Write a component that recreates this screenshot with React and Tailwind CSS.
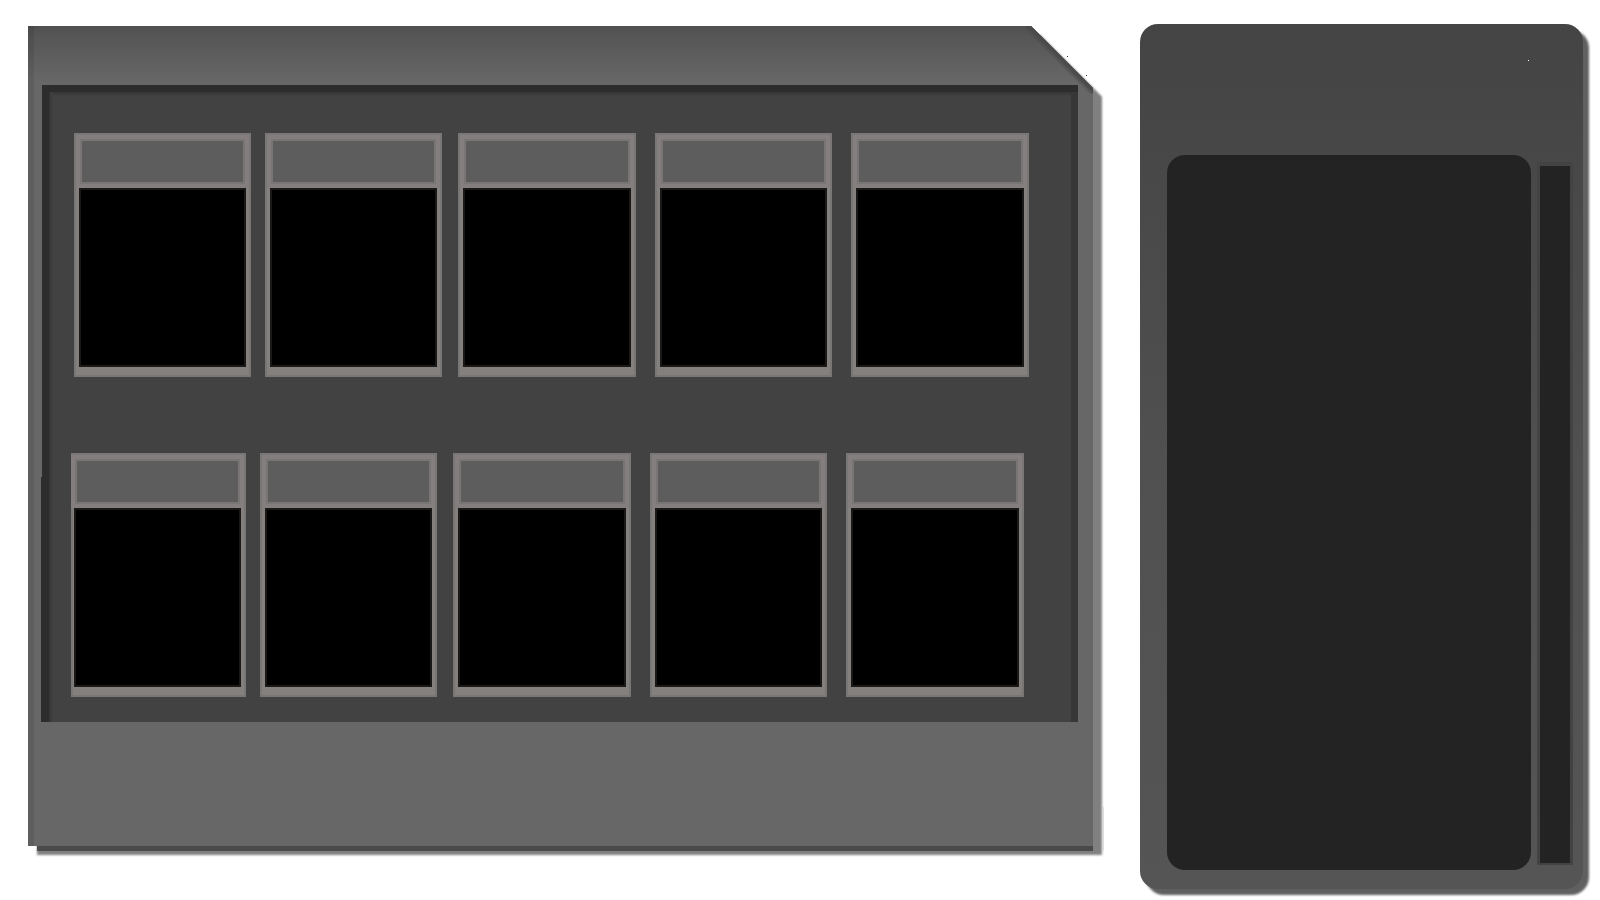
const topRow = [
  'flex-[177] ml-0',
  'flex-[177] ml-[14px]',
  'flex-[178] ml-4',
  'flex-[177] ml-[19px]',
  'flex-[178] ml-[19px]',
];

const bottomRow = [
  'flex-[175] ml-0',
  'flex-[177] ml-[14px]',
  'flex-[178] ml-4',
  'flex-[177] ml-[19px]',
  'flex-[178] ml-[19px]',
];

// A framed slot: a bevelled caption plate above a black display.
function Slot({ className, narrow }) {
  return (
    <div className={`flex h-[244px] flex-col border-2 border-[#797776] bg-[#83807e] ${className}`}>
      <div
        className={`mt-1 mr-1 h-[45px] border-2 border-[#787574] bg-[#5d5d5d] outline-4 outline-[#847f7e] ${
          narrow ? 'ml-[2px]' : 'ml-1'
        }`}
      />
      <div
        className={`relative mt-1 mr-[3px] h-[179px] border-2 border-[#1a1918] bg-black ${
          narrow ? 'ml-px' : 'ml-[3px]'
        }`}
      />
    </div>
  );
}

function SlotBoard() {
  return (
    <section className="relative mr-[15px] ml-[14px] border-t-[7px] border-[#2d2d2d] bg-[#424242] pt-[41px] pr-[49px] pb-[25px] pl-8">
      <div className="absolute inset-y-0 left-0 w-[7px] bg-[#2d2d2d]" />
      <div className="absolute top-[385px] bottom-0 -left-px w-px bg-[#2d2d2d]" />
      <div className="absolute top-0 right-0 left-[7px] h-1 bg-linear-to-b from-[#353535] to-[#424242]" />
      <div className="absolute inset-y-0 left-[7px] w-1 bg-linear-to-r from-[#353535] to-[#424242]" />
      <div className="absolute inset-y-0 right-0 w-[7px] bg-[#373737]" />
      <div className="flex">
        {topRow.map((size, i) => (
          <Slot key={i} className={size} />
        ))}
      </div>
      <div className="mt-[76px] mr-[5px] -ml-[3px] flex">
        {bottomRow.map((size, i) => (
          <Slot key={i} className={size} narrow={i === 0} />
        ))}
      </div>
    </section>
  );
}

export default function App() {
  return (
    <main className="grid min-h-screen grid-cols-[1065fr_443fr] items-start gap-x-[47px] bg-white pr-[17px] pl-7">
      <div className="relative mt-[26px]">
        <div className="drop-shadow-[9px_9px_1px_#808080]">
          <div className="bg-[#666666] [clip-path:polygon(0_0,calc(100%-62px)_0,100%_62px,100%_100%,0_100%)]">
            <div className="relative bg-[linear-gradient(to_bottom,#505050_0px,#555555_8px,#676767_56px)] pt-[59px] pb-[124px]">
              <div className="absolute inset-y-0 left-0 w-[6px] bg-black/8" />
              <div className="absolute top-0 right-0 size-[68px] bg-[linear-gradient(to_top_right,transparent_45px,#4a4a4a_50px)]" />
              <SlotBoard />
            </div>
          </div>
        </div>
        <div className="relative ml-[9px] h-[5px] bg-[#4a4a4a]" />
        <div className="absolute -right-[11px] bottom-0 h-11 w-px bg-[#dddddd]" />
        <span className="absolute top-[30px] right-[25px] size-px bg-[#333333]" />
        <span className="absolute top-[49px] right-[6px] size-px bg-[#333333]" />
      </div>

      <aside className="relative mt-6 flex items-start rounded-[18px] bg-linear-to-b from-[#444444] via-[#505050] via-50% to-[#555555] pt-[131px] pr-[10px] pb-[19px] pl-[27px] drop-shadow-[6px_6px_1px_#606060]">
        <span className="absolute top-9 right-[54px] size-px bg-white" />
        <div className="h-[715px] flex-1 rounded-[18px] bg-[#232323]" />
        <div className="mt-[7px] ml-[6px] h-[703px] w-9 border-x-3 border-t-4 border-b-2 border-[#434343] bg-[#232323]" />
      </aside>
    </main>
  );
}
